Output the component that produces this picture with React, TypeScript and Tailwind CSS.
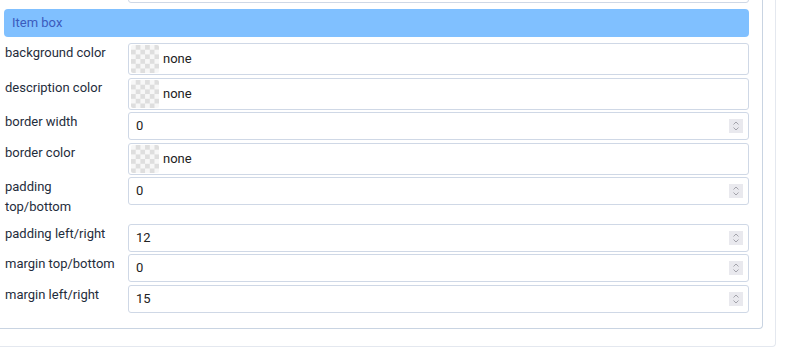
const checker =
  'h-[28px] w-[28px] shrink-0 rounded-[2px] bg-[repeating-conic-gradient(#dedede_0%_25%,#f7f7f7_0%_50%)] bg-[length:9.4px_9.4px]'

type Row = { label: string; kind: 'color' | 'number'; value: string }

const rows: Row[] = [
  { label: 'background color', kind: 'color', value: 'none' },
  { label: 'description color', kind: 'color', value: 'none' },
  { label: 'border width', kind: 'number', value: '0' },
  { label: 'border color', kind: 'color', value: 'none' },
  { label: 'padding top/bottom', kind: 'number', value: '0' },
  { label: 'padding left/right', kind: 'number', value: '12' },
  { label: 'margin top/bottom', kind: 'number', value: '0' },
  { label: 'margin left/right', kind: 'number', value: '15' }
]

function Spinner() {
  return (
    <svg width="14" height="14" viewBox="0 0 14 14" className="shrink-0">
      <rect width="14" height="14" fill="#e9e9ee" />
      <path d="M4.5 5.5 L7 3 L9.5 5.5" fill="none" stroke="#a3a3ab" strokeWidth="1" />
      <path d="M4.5 8.5 L7 11 L9.5 8.5" fill="none" stroke="#a3a3ab" strokeWidth="1" />
    </svg>
  )
}

function Field({ row }: { row: Row }) {
  if (row.kind === 'color') {
    return (
      <div className="flex h-[32px] flex-1 items-center gap-[4px] rounded-[3px] border border-[#cfd8e6] bg-white p-[2px]">
        <div className={checker} />
        <span className="text-[#222]">{row.value}</span>
      </div>
    )
  }
  return (
    <div className="flex h-[28px] flex-1 items-center justify-between rounded-[3px] border border-[#cfd8e6] bg-white pr-[5px] pl-[7px]">
      <span className="text-[#222]">{row.value}</span>
      <Spinner />
    </div>
  )
}

export default function App() {
  return (
    <div className="h-[347px] overflow-hidden bg-white font-['Roboto',sans-serif] text-[13px]">
      <div className="w-[776px] rounded-br-[4px] border-r border-b border-[#e4e8ef] pb-[17px]">
        <div className="w-[763px] rounded-br-[4px] border-r border-b border-[#c9d4e2] pr-[13px] pb-[15px] pl-[4px]">
          <div className="-mt-[27px] flex">
            <div className="w-[124px]" />
            <div className="h-[30px] flex-1 rounded-[3px] border border-[#cfd8e6] bg-white" />
          </div>
          <div className="mt-[6px] flex h-[28px] items-center rounded-[4px] bg-[#80c0ff] pl-[8px] text-[#3b5bbd]">
            Item box
          </div>
          <div className="mt-[6px] flex flex-col gap-[2.5px]">
            {rows.map((row) => (
              <div key={row.label} className="flex items-start">
                <div className="w-[124px] shrink-0 pr-[8px] pl-[1px] leading-[20px] text-[#1f2d3c]">
                  {row.label === 'padding top/bottom' ? (
                    <div className="pb-[4px] leading-[20px]">
                      padding
                      <br />
                      top/bottom
                    </div>
                  ) : (
                    row.label
                  )}
                </div>
                <Field row={row} />
              </div>
            ))}
          </div>
        </div>
      </div>
    </div>
  )
}
